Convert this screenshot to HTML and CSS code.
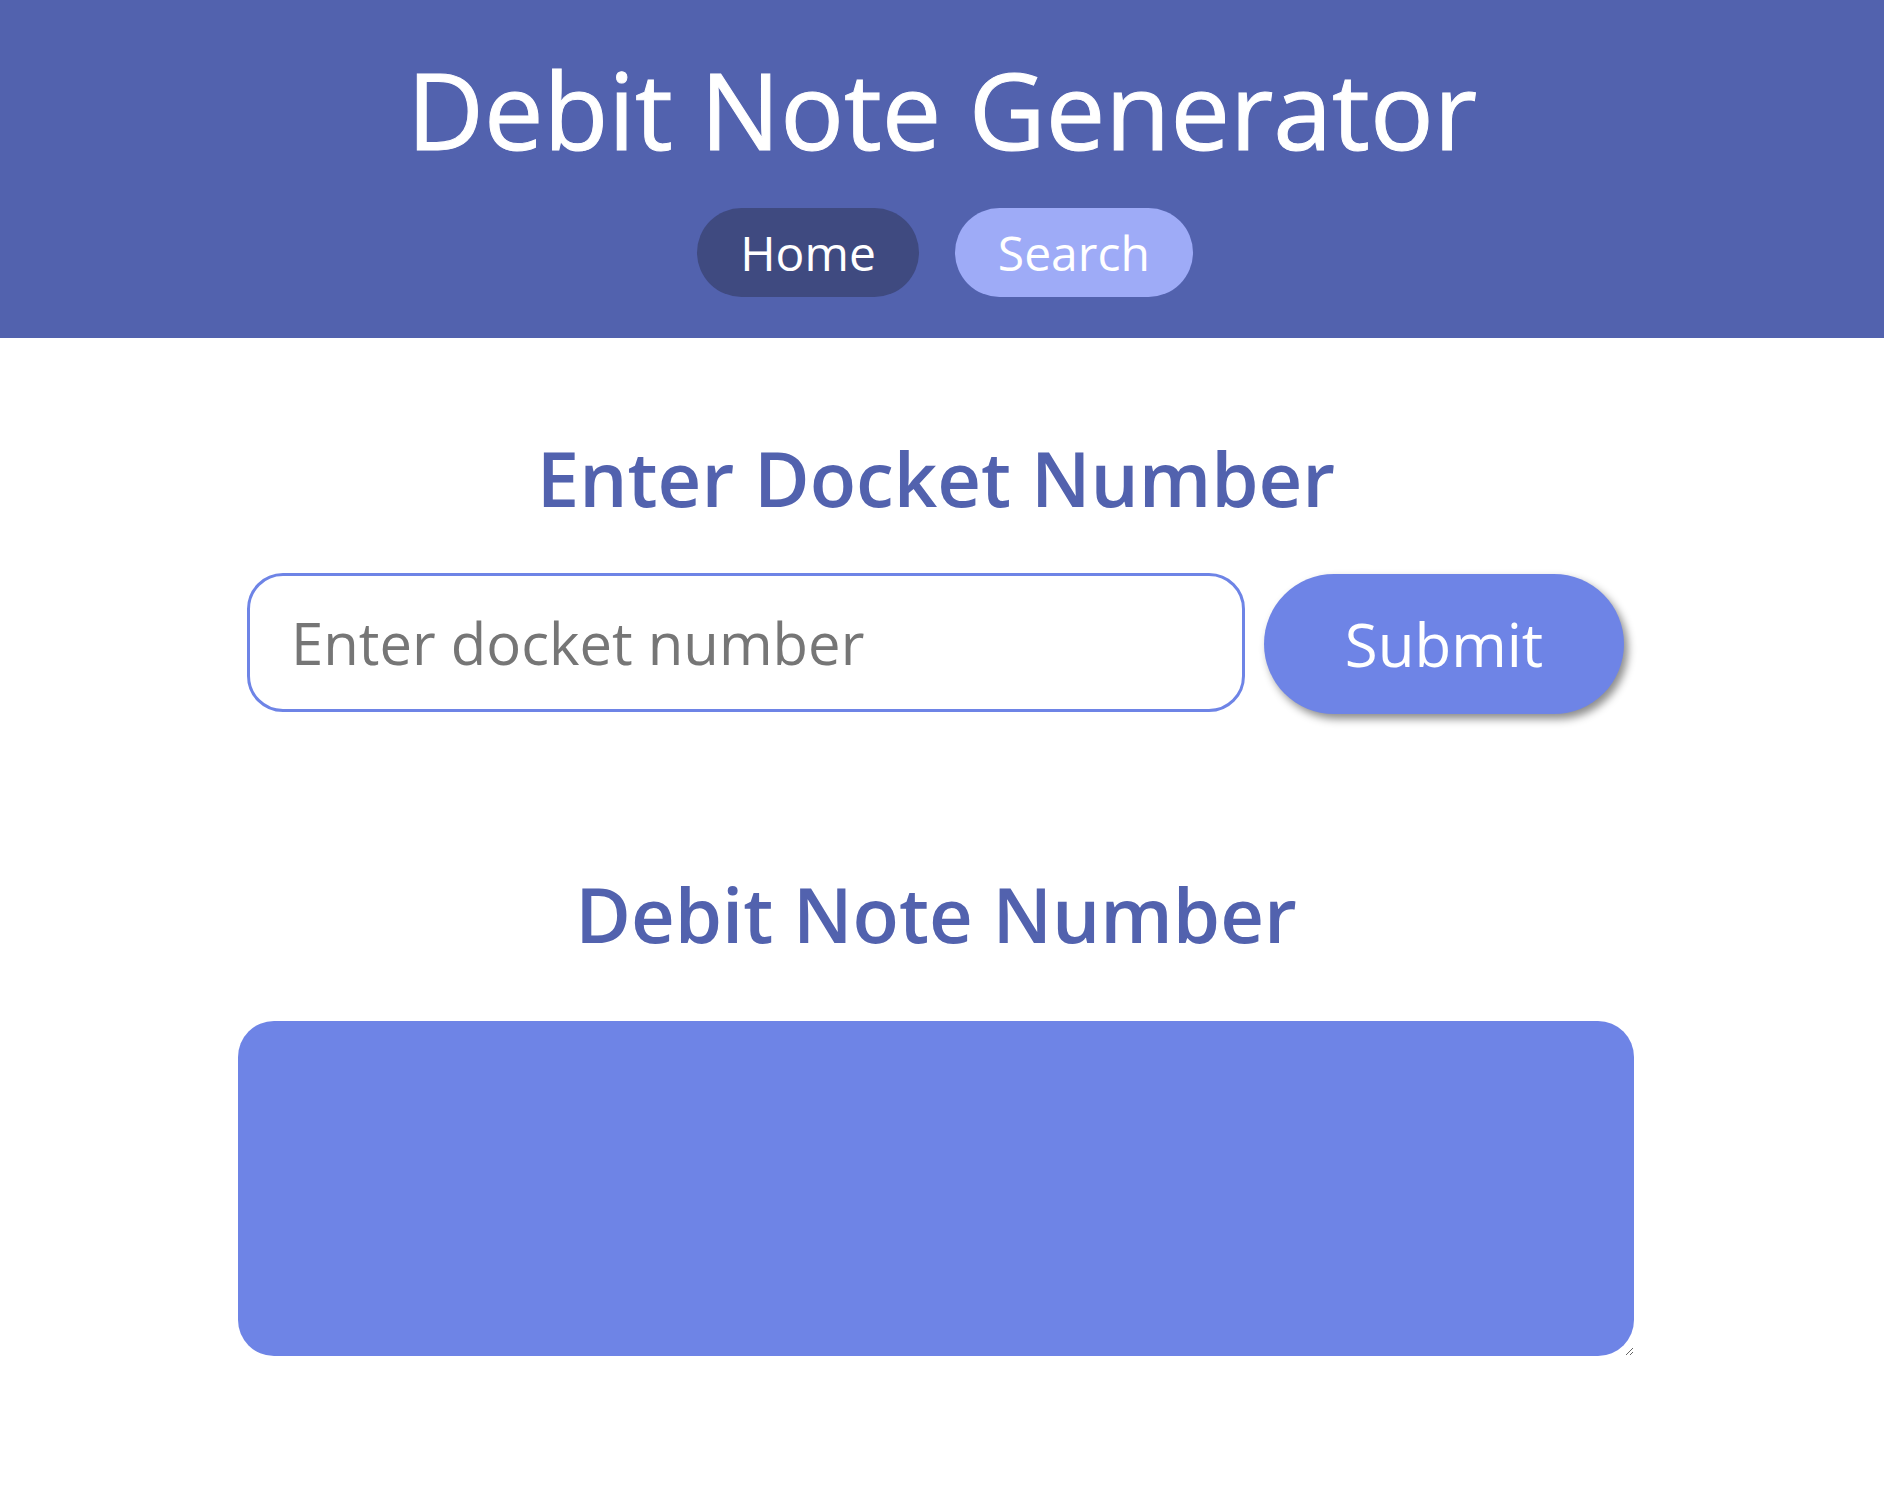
FILE: index.html
```html
<!DOCTYPE html>
<html lang="en">
<head>
<meta charset="utf-8">
<title>Debit Note Generator</title>
<link rel="stylesheet" href="styles.css">
</head>
<body>
<header class="site-header">
  <h1 class="site-title">Debit Note Generator</h1>
  <nav class="nav">
    <a class="nav-pill nav-pill--active" href="#">Home</a>
    <a class="nav-pill nav-pill--light" href="#">Search</a>
  </nav>
</header>
<main class="content">
  <h2 class="section-title section-title--first">Enter Docket Number</h2>
  <form class="docket-form" onsubmit="return false;">
    <input class="docket-input" type="text" placeholder="Enter docket number">
    <button class="submit-btn" type="submit">Submit</button>
  </form>
  <h2 class="section-title section-title--second">Debit Note Number</h2>
  <textarea class="result-box"></textarea>
</main>
</body>
</html>
```
FILE: styles.css
```css
* {
  box-sizing: border-box;
}

body {
  margin: 0;
  background: #ffffff;
  font-family: "Open Sans", "Noto Sans", sans-serif;
}

.site-header {
  background: #5262ae;
  padding: 46px 0 41px;
  display: flex;
  flex-direction: column;
  align-items: center;
}

.site-title {
  margin: 0;
  color: #ffffff;
  font-size: 106px;
  font-weight: 500;
  line-height: 126px;
  text-align: center;
  -webkit-text-stroke: 1px #ffffff;
}

.nav {
  margin-top: 36px;
  margin-left: 6px;
  display: flex;
  gap: 36px;
}

.nav-pill {
  height: 89px;
  padding: 0 43px;
  border-radius: 45px;
  display: flex;
  align-items: center;
  color: #ffffff;
  text-decoration: none;
  font-size: 48px;
  font-weight: 400;
}

.nav-pill--active {
  background: #3f4a80;
}

.nav-pill--light {
  background: #9eabf7;
}

.content {
  width: 1396px;
  margin-left: 238px;
  padding-top: 94px;
  padding-bottom: 153px;
}

.section-title {
  margin: 0;
  color: #5262ae;
  font-size: 76px;
  font-weight: 600;
  line-height: 91px;
  text-align: center;
}

.docket-form {
  margin-top: 50px;
  padding: 0 10px 0 9px;
  display: flex;
  gap: 19px;
  align-items: flex-start;
}

.docket-input {
  width: 998px;
  height: 139px;
  border: 3px solid #6e84e6;
  border-radius: 36px;
  padding: 0 0 0 41px;
  font-family: inherit;
  font-size: 58px;
  color: #333;
  outline: none;
  background: #fff;
}

.docket-input::placeholder {
  color: #767676;
}

.submit-btn {
  width: 360px;
  height: 140px;
  margin-top: 1px;
  border: none;
  border-radius: 70px;
  background: #6e84e6;
  color: #ffffff;
  font-family: inherit;
  font-size: 60px;
  font-weight: 400;
  box-shadow: 4px 5px 8px rgba(0, 0, 0, 0.45);
  cursor: pointer;
}

.section-title--second {
  margin-top: 154px;
}

.result-box {
  display: block;
  width: 1396px;
  height: 335px;
  margin-top: 62px;
  border: none;
  border-radius: 36px;
  background: #6e84e6;
  outline: none;
  font-family: inherit;
}
```
